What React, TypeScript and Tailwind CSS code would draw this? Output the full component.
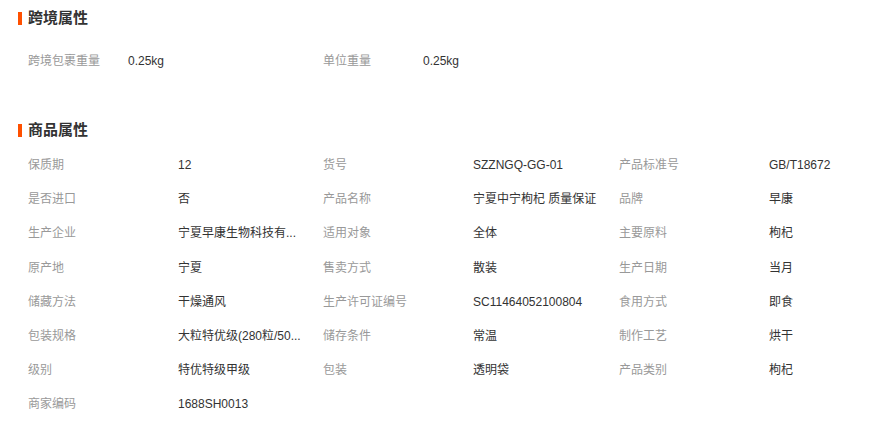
import React from "react";

interface Attr {
  label: string;
  value: string;
}

const crossBorder: Attr[] = [
  { label: "跨境包裹重量", value: "0.25kg" },
  { label: "单位重量", value: "0.25kg" },
];

const productAttrs: Attr[] = [
  { label: "保质期", value: "12" },
  { label: "货号", value: "SZZNGQ-GG-01" },
  { label: "产品标准号", value: "GB/T18672" },
  { label: "是否进口", value: "否" },
  { label: "产品名称", value: "宁夏中宁枸杞 质量保证" },
  { label: "品牌", value: "早康" },
  { label: "生产企业", value: "宁夏早康生物科技有..." },
  { label: "适用对象", value: "全体" },
  { label: "主要原料", value: "枸杞" },
  { label: "原产地", value: "宁夏" },
  { label: "售卖方式", value: "散装" },
  { label: "生产日期", value: "当月" },
  { label: "储藏方法", value: "干燥通风" },
  { label: "生产许可证编号", value: "SC11464052100804" },
  { label: "食用方式", value: "即食" },
  { label: "包装规格", value: "大粒特优级(280粒/50..." },
  { label: "储存条件", value: "常温" },
  { label: "制作工艺", value: "烘干" },
  { label: "级别", value: "特优特级甲级" },
  { label: "包装", value: "透明袋" },
  { label: "产品类别", value: "枸杞" },
  { label: "商家编码", value: "1688SH0013" },
];

const Heading: React.FC<{ title: string; className?: string }> = ({ title, className }) => (
  <div className={`flex items-center h-6 ${className ?? ""}`}>
    <span className="w-1 h-[13px] bg-[#ff5000]"></span>
    <span className="ml-[6px] text-[15px] font-bold text-[#333]">{title}</span>
  </div>
);

export default function App() {
  return (
    <div
      className="w-[894px] h-[428px] bg-white pl-[18px] overflow-hidden"
      style={{ fontFamily: '"Liberation Sans", "Noto Sans CJK SC", sans-serif' }}
    >
      {/* 跨境属性 */}
      <Heading title="跨境属性" className="mt-[6px]" />
      <div className="flex mt-[14px] h-[34px] items-center pl-[10px] text-xs">
        {crossBorder.map((a) => (
          <div key={a.label} className="flex w-[295px]">
            <span className="w-[100px] text-[#999]">{a.label}</span>
            <span className="text-[#333]">{a.value}</span>
          </div>
        ))}
      </div>

      {/* 商品属性 */}
      <Heading title="商品属性" className="mt-[40px]" />
      <div className="grid grid-cols-[295px_296px_1fr] mt-[6px] pl-[10px] text-xs">
        {productAttrs.map((a) => (
          <div key={a.label} className="flex items-center h-[34.2px]">
            <span className="w-[150px] shrink-0 text-[#999]">{a.label}</span>
            <span className="whitespace-nowrap text-[#333]">{a.value}</span>
          </div>
        ))}
      </div>
    </div>
  );
}
